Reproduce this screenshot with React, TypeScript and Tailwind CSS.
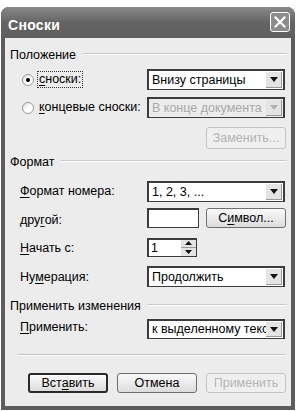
import React from "react";

const font = { fontFamily: '"Liberation Sans", Arial, sans-serif' };

function U({ children }: { children: React.ReactNode }) {
  return <span className="underline underline-offset-2">{children}</span>;
}

function Arrow({ disabled }: { disabled?: boolean }) {
  return (
    <div className="w-[16px] h-full bg-[#e4e4e4] border-r border-b border-[#9a9a9a] flex items-center justify-center">
      <svg width="8" height="5" viewBox="0 0 8 5">
        <path d="M0 0 L8 0 L4 5 Z" fill={disabled ? "#b0b0b0" : "#111"} />
      </svg>
    </div>
  );
}

function Combo({ text, disabled, h = 21 }: { text: string; disabled?: boolean; h?: number }) {
  return (
    <div
      className={`w-[138px] flex items-stretch border-2 border-b border-[#3c3c3c] ${disabled ? "bg-[#ececec]" : "bg-white"}`}
      style={{ height: h }}
    >
      <div
        className={`flex-1 overflow-hidden whitespace-nowrap pl-[3px] text-[12.5px] leading-[17px] flex items-center ${disabled ? "text-[#a8a8a8]" : "text-black"}`}
      >
        {text}
      </div>
      <div className="py-[1px] pr-[1px]">
        <Arrow disabled={disabled} />
      </div>
    </div>
  );
}

function Btn({
  children,
  disabled,
  def,
  h = 20,
}: {
  children: React.ReactNode;
  disabled?: boolean;
  def?: boolean;
  h?: number;
}) {
  return (
    <div
      className={`w-[80px] flex items-center justify-center rounded-[3px] text-[12.5px] ${
        def ? "border-2 border-[#2a2a2a]" : disabled ? "border border-[#c4c4c4]" : "border border-[#6e6e6e]"
      } ${disabled ? "text-[#b4b4b4] bg-[#efefef]" : "text-black bg-gradient-to-b from-[#fafafa] to-[#dcdcdc]"}`}
      style={{ height: h }}
    >
      {children}
    </div>
  );
}

function Header({ text }: { text: string }) {
  return (
    <div className="h-[16px] flex items-center text-[12.5px] text-black">
      <span className="whitespace-nowrap">{text}</span>
      <div className="flex-1 ml-[7px] mt-[-3px] h-[2px] border-t border-[#c8c8c8] border-b border-b-white" />
    </div>
  );
}

function Radio({ checked }: { checked?: boolean }) {
  return (
    <div className="w-[12px] h-[12px] rounded-full border border-[#9a9a9a] bg-gradient-to-br from-[#d8d8d8] via-white to-white flex items-center justify-center">
      {checked && <div className="w-[4px] h-[4px] rounded-full bg-black" />}
    </div>
  );
}

export default function App() {
  return (
    <div className="w-[297px] h-[411px] bg-white pt-[7px] pl-[1px] pr-[2px] pb-[1px]" style={font}>
      <div className="h-full flex flex-col rounded-t-[8px] bg-[#5c5c5c]">
        <div className="h-[31px] shrink-0 flex items-center justify-between pl-[7px] pr-[5px] rounded-t-[8px] bg-gradient-to-b from-[#8a8a8a] via-[#646464] to-[#5e5e5e]">
          <span className="text-white font-bold text-[14px] mt-[5px] tracking-[0.3px]">Сноски</span>
          <div className="w-[20px] h-[20px] mt-[-2px] rounded-[3px] border border-white bg-[#8c8c8c] flex items-center justify-center">
            <svg width="12" height="12" viewBox="0 0 12 12">
              <path d="M1.5 1.5 L10.5 10.5 M10.5 1.5 L1.5 10.5" stroke="white" strokeWidth="2.2" strokeLinecap="square" />
            </svg>
          </div>
        </div>
        <div className="flex-1 mx-[4px] mb-[4px] bg-[#ececec] pl-[5px] pr-[4px] pt-[9px] flex flex-col">
          <Header text="Положение" />
          <div className="mt-[6px] h-[21px] flex items-center">
            <div className="w-[137px] flex items-center text-[12.5px] pl-[12px]">
              <Radio checked />
              <span className="ml-[3px] px-[1px] border border-dotted border-[#333] leading-[15px]">
                <U>с</U>носки:
              </span>
            </div>
            <Combo text="Внизу страницы" />
          </div>
          <div className="mt-[7px] h-[21px] flex items-center">
            <div className="w-[137px] flex items-center text-[12.5px] pl-[12px]">
              <Radio />
              <span className="ml-[4px] px-[1px] whitespace-nowrap">
                <U>к</U>онцевые сноски:
              </span>
            </div>
            <Combo text="В конце документа" disabled />
          </div>
          <div className="mt-[9px] flex justify-end pr-[1px]">
            <Btn disabled h={22}>Заменить...</Btn>
          </div>
          <div className="mt-[5px]">
            <Header text="Формат" />
          </div>
          <div className="mt-[11px] h-[21px] flex items-center">
            <div className="w-[137px] pl-[10px] text-[12.5px]">
              <U>Ф</U>ормат номера:
            </div>
            <Combo text="1, 2, 3, ..." />
          </div>
          <div className="mt-[6px] h-[20px] flex items-center">
            <div className="w-[137px] pl-[10px] text-[12.5px] mt-[4px]">
              дру<U>г</U>ой:
            </div>
            <div className="w-[52px] h-[20px] bg-white border-2 border-b border-r border-[#3c3c3c]" />
            <div className="ml-[7px]">
              <Btn>
                С<U>и</U>мвол...
              </Btn>
            </div>
          </div>
          <div className="mt-[9px] h-[20px] flex items-center">
            <div className="w-[137px] pl-[10px] text-[12.5px] mt-[3px]">
              <U>Н</U>ачать с:
            </div>
            <div className="w-[50px] h-[19px] bg-white border-2 border-b border-r border-[#3c3c3c] flex">
              <div className="flex-1 pl-[2px] text-[12.5px] leading-[16px]">1</div>
              <div className="w-[15px] flex flex-col bg-[#e4e4e4]">
                <div className="flex-1 flex items-center justify-center border-b border-[#9a9a9a]">
                  <svg width="7" height="4" viewBox="0 0 7 4">
                    <path d="M0 4 L7 4 L3.5 0 Z" fill="#111" />
                  </svg>
                </div>
                <div className="flex-1 flex items-center justify-center">
                  <svg width="7" height="4" viewBox="0 0 7 4">
                    <path d="M0 0 L7 0 L3.5 4 Z" fill="#111" />
                  </svg>
                </div>
              </div>
            </div>
          </div>
          <div className="mt-[9px] h-[21px] flex items-center">
            <div className="w-[137px] pl-[10px] text-[12.5px] mt-[2px]">
              Ну<U>м</U>ерация:
            </div>
            <Combo text="Продолжить" />
          </div>
          <div className="mt-[11px]">
            <Header text="Применить изменения" />
          </div>
          <div className="mt-[5px] h-[20px] flex items-center">
            <div className="w-[137px] pl-[10px] text-[12.5px] mt-[-4px]">
              <U>П</U>рименить:
            </div>
            <Combo text="к выделенному тексту" h={20} />
          </div>
          <div className="mt-[15px] ml-[7px] mr-[2px] h-[2px] border-t border-[#c4c4c4] border-b border-b-white" />
          <div className="mt-[17px] flex justify-end pr-[1px] gap-[9px]">
            <Btn def>
              Вст<U>а</U>вить
            </Btn>
            <Btn>Отмена</Btn>
            <Btn disabled>Применить</Btn>
          </div>
        </div>
      </div>
    </div>
  );
}
